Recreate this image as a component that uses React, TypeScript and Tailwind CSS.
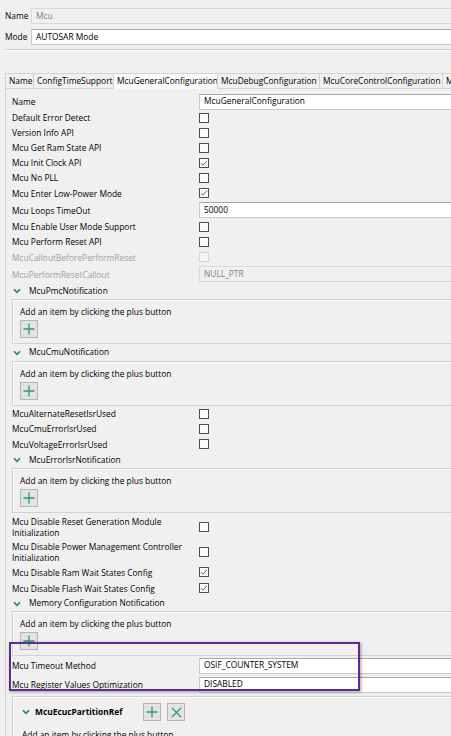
import React from "react";

const Check = ({ checked = false, disabled = false }: { checked?: boolean; disabled?: boolean }) => (
  <div
    className={
      "w-[10px] h-[10px] border flex items-center justify-center " +
      (disabled ? "border-[#d4d4d4] bg-[#f4f4f4]" : "border-[#4f4f4f] bg-[#fbfbfb]")
    }
  >
    {checked && (
      <svg width="8" height="8" viewBox="0 0 8 8">
        <path d="M1 4.2 L3 6.2 L7 1.8" fill="none" stroke="#555" strokeWidth="0.9" />
      </svg>
    )}
  </div>
);

const Field = ({ value, disabled = false }: { value: string; disabled?: boolean }) => (
  <div
    className={
      "flex-1 h-[16px] border flex items-center pl-[4px] " +
      (disabled
        ? "border-[#d9d9d9] bg-[#f0f0f0] text-[#808080]"
        : "border-[#c8c8c8] border-t-[#a9a9a9] bg-white text-black")
    }
  >
    {value}
  </div>
);

const Chevron = ({ className = "" }: { className?: string }) => (
  <svg width="8" height="6" viewBox="0 0 8 6" className={className}>
    <path d="M1 1.2 L4 4.4 L7 1.2" fill="none" stroke="#1f8a5a" strokeWidth="1.6" />
  </svg>
);

const PlusBtn = () => (
  <div className="w-[18px] h-[18px] bg-[#e3e3e3] border border-[#b4b4b4] flex items-center justify-center">
    <svg width="12" height="12" viewBox="0 0 12 12">
      <path d="M6 0.5 V11.5 M0.5 6 H11.5" stroke="#2b9a68" strokeWidth="1.3" />
    </svg>
  </div>
);

const XBtn = () => (
  <div className="w-[18px] h-[18px] bg-[#e3e3e3] border border-[#b4b4b4] flex items-center justify-center">
    <svg width="11" height="11" viewBox="0 0 11 11">
      <path d="M1 1 L10 10 M10 1 L1 10" stroke="#2b9a68" strokeWidth="1.3" />
    </svg>
  </div>
);

const Row = ({
  label,
  h = 15,
  children,
  disabled = false,
}: {
  label: React.ReactNode;
  h?: number;
  children?: React.ReactNode;
  disabled?: boolean;
}) => (
  <div className="flex items-center" style={{ height: h }}>
    <div className={"w-[187px] shrink-0 leading-[11px] " + (disabled ? "text-[#a0a0a0]" : "text-black")}>
      {label}
    </div>
    <div className="flex-1 flex items-center">{children}</div>
  </div>
);

const Header = ({ label, h = 16 }: { label: string; h?: number }) => (
  <div className="flex items-center" style={{ height: h }}>
    <Chevron className="ml-[1px]" />
    <span className="ml-[8px] text-black">{label}</span>
  </div>
);

const Box = () => (
  <div className="h-[45px] border border-[#d2d2d2] shadow-[inset_1px_1px_0_#ffffff] pl-[7px] pt-[5px]">
    <div className="h-[14px] flex items-center text-black">Add an item by clicking the plus button</div>
    <div className="mt-[1px]">
      <PlusBtn />
    </div>
  </div>
);

const tabs = [
  { t: "Name", w: 29 },
  { t: "ConfigTimeSupport", w: 80 },
  { t: "McuGeneralConfiguration", w: 104, sel: true },
  { t: "McuDebugConfiguration", w: 102 },
  { t: "McuCoreControlConfiguration", w: 123 },
  { t: "McuLoggingConfiguration", w: 60 },
];

export default function App() {
  return (
    <div className="w-[451px] h-[736px] overflow-hidden relative bg-[#f0f0f0] font-['Open_Sans','Noto_Sans',sans-serif] text-[8.4px] text-black">
      {/* top fields */}
      <div className="pt-[8px] pl-[5px] w-[480px]">
        <div className="flex items-center h-[16px]">
          <span className="w-[26px] shrink-0">Name</span>
          <Field value="Mcu" disabled />
        </div>
        <div className="flex items-center h-[16px] mt-[5px]">
          <span className="w-[26px] shrink-0">Mode</span>
          <Field value="AUTOSAR Mode" />
        </div>
        <div className="mt-[4px] h-[1px] bg-[#d0d0d0]" />
        <div className="h-[1px] bg-white" />
      </div>

      {/* tabs */}
      <div className="mt-[22px] pl-[5px] flex h-[16px] w-[520px]">
        {tabs.map((tb, i) => (
          <div
            key={i}
            className={
              "shrink-0 h-full flex items-center justify-start pl-[3px] overflow-hidden whitespace-nowrap border-t border-r border-[#d3d3d3] " +
              (i === 0 ? "border-l " : "") +
              (tb.sel ? "bg-[#fafafa]" : "bg-[#f0f0f0] border-b")
            }
            style={{ width: tb.w }}
          >
            {tb.t}
          </div>
        ))}
      </div>

      {/* content */}
      <div className="ml-[5px] border-l border-[#cfcfcf] w-[490px] pl-[6px] pt-[4px] h-[700px]">
        <Row label="Name" h={17}>
          <Field value="McuGeneralConfiguration" />
        </Row>
        <Row label="Default Error Detect"><Check /></Row>
        <Row label="Version Info API"><Check /></Row>
        <Row label="Mcu Get Ram State API"><Check /></Row>
        <Row label="Mcu Init Clock API"><Check checked /></Row>
        <Row label="Mcu No PLL"><Check /></Row>
        <Row label="Mcu Enter Low-Power Mode" h={16}><Check checked /></Row>
        <Row label="Mcu Loops TimeOut" h={18}>
          <Field value="50000" />
        </Row>
        <Row label="Mcu Enable User Mode Support"><Check /></Row>
        <Row label="Mcu Perform Reset API"><Check /></Row>
        <Row label="McuCalloutBeforePerformReset" h={16} disabled><Check disabled /></Row>
        <Row label="McuPerformResetCallout" h={18} disabled>
          <Field value="NULL_PTR" disabled />
        </Row>
        <Header label="McuPmcNotification" />
        <Box />
        <Header label="McuCmuNotification" h={17} />
        <Box />
        <Row label="McuAlternateResetIsrUsed"><Check /></Row>
        <Row label="McuCmuErrorIsrUsed"><Check /></Row>
        <Row label="McuVoltageErrorIsrUsed" h={16}><Check /></Row>
        <Header label="McuErrorIsrNotification" />
        <Box />
        <Row
          h={27}
          label={
            <>
              Mcu Disable Reset Generation Module
              <br />
              Initialization
            </>
          }
        >
          <Check />
        </Row>
        <Row
          h={24}
          label={
            <>
              Mcu Disable Power Management Controller
              <br />
              Initialization
            </>
          }
        >
          <Check />
        </Row>
        <Row label="Mcu Disable Ram Wait States Config" h={16}><Check checked /></Row>
        <Row label="Mcu Disable Flash Wait States Config" h={16}><Check checked /></Row>
        <Header label="Memory Configuration Notification" h={15} />
        <Box />
        <Row label="Mcu Timeout Method" h={19}>
          <Field value="OSIF_COUNTER_SYSTEM" />
        </Row>
        <Row label="Mcu Register Values Optimization" h={19}>
          <Field value="DISABLED" />
        </Row>
        <div className="h-[2px]" />
        <div className="border border-[#d2d2d2] shadow-[inset_1px_1px_0_#ffffff] h-[80px] pl-[9px] pt-[6px]">
          <div className="flex items-center h-[18px]">
            <Chevron />
            <span className="ml-[5px] font-bold w-[108px]">McuEcucPartitionRef</span>
            <PlusBtn />
            <div className="w-[6px]" />
            <XBtn />
          </div>
          <div className="mt-[7px] h-[14px] flex items-center">Add an item by clicking the plus button</div>
        </div>
      </div>

      {/* highlight */}
      <div className="absolute left-[9px] top-[642px] w-[351px] h-[49px] border-2 border-[#5e2c8e] shadow-[1px_1px_3px_rgba(0,0,0,0.35)] pointer-events-none" />
    </div>
  );
}
